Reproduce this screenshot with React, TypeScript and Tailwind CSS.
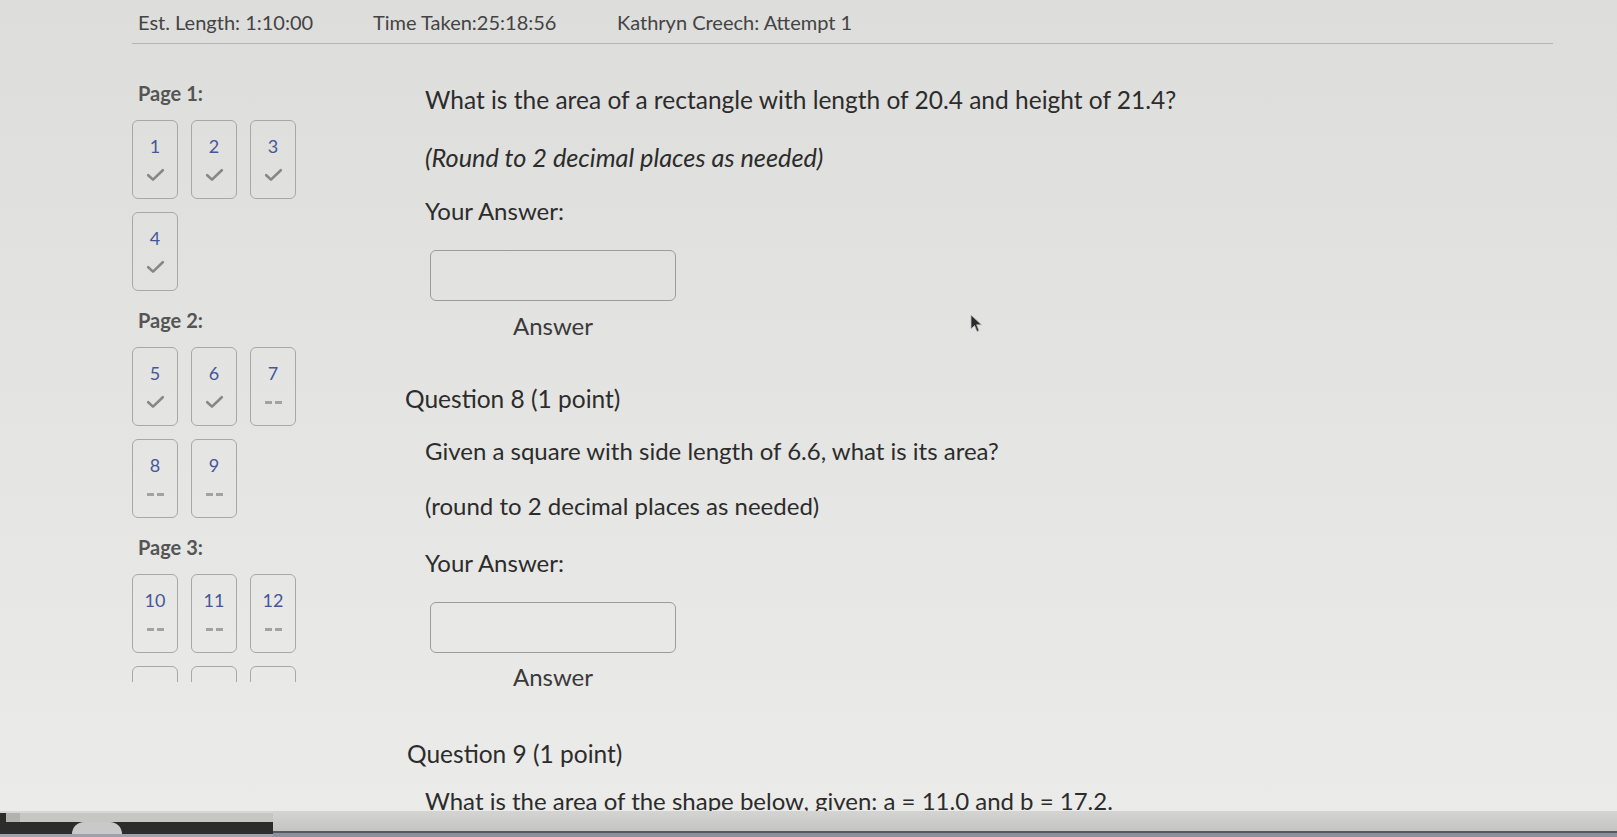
type Item = { n: number | null; done: boolean }

const pages: { label: string; items: Item[] }[] = [
  {
    label: 'Page 1:',
    items: [1, 2, 3, 4].map(n => ({ n, done: true })),
  },
  {
    label: 'Page 2:',
    items: [
      { n: 5, done: true },
      { n: 6, done: true },
      { n: 7, done: false },
      { n: 8, done: false },
      { n: 9, done: false },
    ],
  },
  {
    label: 'Page 3:',
    items: [
      { n: 10, done: false },
      { n: 11, done: false },
      { n: 12, done: false },
      { n: null, done: false },
      { n: null, done: false },
      { n: null, done: false },
    ],
  },
]

function CheckMark() {
  return (
    <svg className="mt-[11px]" width="19" height="14" viewBox="0 0 19 14" fill="none">
      <path d="M2.2 7.2 L7 11.6 L16.8 2.2" stroke="#878787" strokeWidth="2.6" strokeLinecap="round" strokeLinejoin="round" />
    </svg>
  )
}

function Tile({ item }: { item: Item }) {
  return (
    <div className="w-[46px] h-[79px] border-[1.5px] border-[#a8a8a6] rounded-[6px] flex flex-col items-center pt-[14px]">
      {item.n !== null && (
        <>
          <span className="text-[18px] leading-[22px] text-[#45579a]">{item.n}</span>
          {item.done ? (
            <CheckMark />
          ) : (
            <div className="mt-[17px] flex gap-[3px]">
              <span className="w-[7px] h-[2.5px] bg-[#a2a2a2]" />
              <span className="w-[7px] h-[2.5px] bg-[#a2a2a2]" />
            </div>
          )}
        </>
      )}
    </div>
  )
}

function AnswerBox({ mt }: { mt: string }) {
  return (
    <div className={`ml-[25px] ${mt} w-[246px]`}>
      <div className="h-[51px] border-[1.5px] border-[#9c9c9a] rounded-[6px]" />
    </div>
  )
}

export default function App() {
  return (
    <div
      className="relative w-[1617px] h-[837px] overflow-hidden flex flex-col text-[#2c2c2c]"
      style={{ fontFamily: 'Lato, "Open Sans", sans-serif' }}
    >
      <div className="h-[811px] overflow-hidden bg-linear-to-b from-[#dddddb] via-[#e4e4e2] to-[#ebebe9] pl-[132px]">
        {/* header */}
        <div className="w-[1421px] h-[44px] border-b-[1.5px] border-[#b4b4b4] flex items-center pl-[6px] text-[20px] text-[#444]">
          <span className="w-[235px]">Est. Length: 1:10:00</span>
          <span className="w-[244px]">Time Taken:25:18:56</span>
          <span>Kathryn Creech: Attempt 1</span>
        </div>

        <div className="flex">
          {/* question navigator */}
          <div className="w-[273px] h-[638px] overflow-hidden pt-[37px] shrink-0">
            {pages.map((p, i) => (
              <div key={p.label} className={i === 0 ? '' : 'mt-[17px]'}>
                <div className="pl-[6px] text-[20px] leading-[24px] font-bold text-[#555]">{p.label}</div>
                <div className="mt-[15px] grid grid-cols-[repeat(3,46px)] gap-x-[13px] gap-y-[13px]">
                  {p.items.map((it, j) => (
                    <Tile key={j} item={it} />
                  ))}
                </div>
              </div>
            ))}
          </div>

          {/* questions */}
          <div className="flex-1 pt-[42px] text-[24px] leading-[28px]">
            <div className="pl-[20px] text-[24.5px]">What is the area of a rectangle with length of 20.4 and height of 21.4?</div>
            <div className="pl-[20px] mt-[29px] italic text-[25.3px]">(Round to 2 decimal places as needed)</div>
            <div className="pl-[20px] mt-[26px]">Your Answer:</div>
            <AnswerBox mt="mt-[25px]" />
            <div className="ml-[25px] w-[246px] mt-[11px] text-center text-[#3a3a3a]">Answer</div>

            <div className="mt-[45px] text-[24.5px]">Question 8 (1 point)</div>
            <div className="pl-[20px] mt-[24px]">Given a square with side length of 6.6, what is its area?</div>
            <div className="pl-[20px] mt-[27px]">(round to 2 decimal places as needed)</div>
            <div className="pl-[20px] mt-[29px]">Your Answer:</div>
            <AnswerBox mt="mt-[25px]" />
            <div className="ml-[25px] w-[246px] mt-[10px] text-center text-[#3a3a3a]">Answer</div>

            <div className="mt-[49px] pl-[2px] text-[24.5px]">Question 9 (1 point)</div>
            <div className="pl-[20px] mt-[19px]">What is the area of the shape below, given: a = 11.0 and b = 17.2.</div>
          </div>
        </div>
      </div>

      {/* monitor bezel */}
      <div className="flex-1 flex">
        <div className="w-[273px] flex flex-col bg-[#2c2c2c]">
          <div className="h-[2px] bg-[#d6d6d4]" />
          <div className="h-[9px] ml-[6px] bg-[#c6c6c4] border-l-[14px] border-[#b2b2b0]" />
          <div className="flex-1 flex">
            <div className="w-[72px]" />
            <div className="w-[50px] bg-[#c9c9c9] rounded-t-[12px]" />
          </div>
          <div className="h-[3px] bg-[#9ea1ab]" />
        </div>
        <div className="flex-1 flex flex-col">
          <div className="flex-1 bg-linear-to-b from-[#d4d4d2] to-[#c4c4c2]" />
          <div className="h-[2px] bg-[#55585f]" />
          <div className="h-[4px] bg-[#8c909b]" />
        </div>
      </div>

      {/* mouse pointer */}
      <svg className="absolute left-[970px] top-[314px]" width="14" height="20" viewBox="0 0 14 20">
        <path d="M1 1 L1 15 L4.5 11.5 L7 17.5 L9 16.6 L6.6 10.8 L11.5 10.8 Z" fill="#2a2a2a" stroke="#bbb" strokeWidth="0.8" />
      </svg>
    </div>
  )
}
